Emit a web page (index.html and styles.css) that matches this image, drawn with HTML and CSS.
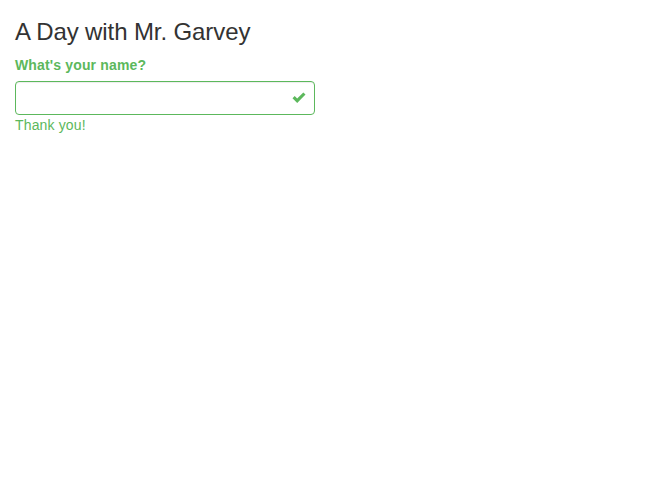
FILE: index.html
```html
<!DOCTYPE html>
<html>
<head>
<meta charset="utf-8">
<link rel="stylesheet" href="styles.css">
</head>
<body>
<div class="container">
  <h3 class="title">A Day with Mr. Garvey</h3>
  <div class="form-group">
    <label class="label" for="name">What's your name?</label>
    <div class="field">
      <input id="name" class="input" type="text">
      <span class="feedback">
        <svg width="14" height="12" viewBox="0 0 14 12"><path d="M0.5 6.2 L2.7 4 L5.2 6.5 L11.3 0.4 L13.5 2.6 L5.2 10.9 Z" fill="#5cb85c"/></svg>
      </span>
    </div>
    <span class="help">Thank you!</span>
  </div>
</div>
</body>
</html>
```
FILE: styles.css
```css
* { box-sizing: border-box; }
html, body { margin: 0; padding: 0; background: #fff; }
body {
  font-family: "Liberation Sans", Arial, sans-serif;
  font-size: 14px;
  line-height: 1.42857;
  color: #333;
}
.container { padding: 0 15px; }
.title {
  font-size: 24px;
  font-weight: 400;
  line-height: 1.1;
  margin: 19px 0 10px;
  color: #333;
  letter-spacing: -0.1px;
}
.form-group { width: 300px; }
.label {
  display: block;
  font-weight: 700;
  color: #5cb85c;
  margin: 0 0 5px;
  padding-top: 1px;
  letter-spacing: 0.15px;
}
.field { position: relative; }
.input {
  display: block;
  width: 300px;
  height: 34px;
  padding: 6px 42px 6px 12px;
  border: 1px solid #5cb85c;
  border-radius: 4px;
  font: inherit;
  outline: none;
  box-shadow: inset 0 1px 1px rgba(0,0,0,0.075);
}
.feedback {
  position: absolute;
  top: 0;
  right: 0;
  width: 34px;
  height: 34px;
  display: flex;
  align-items: center;
  justify-content: center;
  padding-left: 2px;
}
.help {
  display: block;
  color: #5cb85c;
  margin-top: 1px;
  letter-spacing: 0.15px;
}
```
